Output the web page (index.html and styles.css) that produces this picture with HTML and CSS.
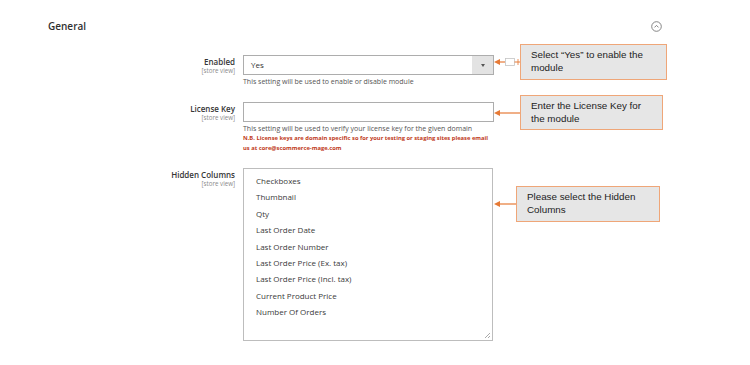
FILE: index.html
```html
<!DOCTYPE html>
<html lang="en">
<head>
  <meta charset="UTF-8">
  <meta name="viewport" content="width=device-width, initial-scale=1.0">
  <title>General Settings</title>
  <link rel="stylesheet" href="styles.css">
</head>
<body>
  <div class="section">
    <div class="section-head">
      <h2>General</h2>
      <span class="toggle">
        <svg width="11" height="11" viewBox="0 0 11 11">
          <circle cx="5.5" cy="5.5" r="4.8" fill="none" stroke="#777" stroke-width="0.9"/>
          <path d="M3.5 6.4 L5.5 4.4 L7.5 6.4" fill="none" stroke="#777" stroke-width="0.9"/>
        </svg>
      </span>
    </div>

    <div class="field">
      <div class="label">
        <span class="name">Enabled</span>
        <span class="scope">[store view]</span>
      </div>
      <div class="control">
        <div class="select">
          <span class="value">Yes</span>
          <span class="caret"></span>
        </div>
        <p class="note">This setting will be used to enable or disable module</p>
      </div>
      <div class="hint hint-enabled">
        <svg class="arrow" width="26" height="10" viewBox="0 0 26 10">
          <polygon points="0,5 6,2 6,8" fill="#e67a36"/>
          <line x1="5" y1="5" x2="11" y2="5" stroke="#e67a36" stroke-width="1.2"/>
          <rect x="11.5" y="1.5" width="9" height="7" fill="none" stroke="#c4c4c4" stroke-width="0.8"/>
          <line x1="20.5" y1="5" x2="26" y2="5" stroke="#e67a36" stroke-width="1"/>
          <line x1="24" y1="2" x2="24" y2="8" stroke="#e67a36" stroke-width="0.8"/>
        </svg>
        <div class="hint-box">Select “Yes” to enable the module</div>
      </div>
    </div>

    <div class="field">
      <div class="label">
        <span class="name">License Key</span>
        <span class="scope">[store view]</span>
      </div>
      <div class="control">
        <div class="input"></div>
        <p class="note">This setting will be used to verify your license key for the given domain</p>
        <p class="note warn">N.B. License keys are domain specific so for your testing or staging sites please email us at core@scommerce-mage.com</p>
      </div>
      <div class="hint hint-license">
        <svg class="arrow" width="26" height="10" viewBox="0 0 26 10">
          <polygon points="0,5 6,2 6,8" fill="#e67a36"/>
          <line x1="5" y1="5" x2="26" y2="5" stroke="#e67a36" stroke-width="1.2"/>
        </svg>
        <div class="hint-box">Enter the License Key for the module</div>
      </div>
    </div>

    <div class="field">
      <div class="label">
        <span class="name">Hidden Columns</span>
        <span class="scope">[store view]</span>
      </div>
      <div class="control">
        <ul class="multiselect">
          <li>Checkboxes</li>
          <li>Thumbnail</li>
          <li>Qty</li>
          <li>Last Order Date</li>
          <li>Last Order Number</li>
          <li>Last Order Price (Ex. tax)</li>
          <li>Last Order Price (Incl. tax)</li>
          <li>Current Product Price</li>
          <li>Number Of Orders</li>
        </ul>
      </div>
      <div class="hint hint-columns">
        <svg class="arrow" width="22" height="10" viewBox="0 0 22 10">
          <polygon points="0,5 6,2 6,8" fill="#e67a36"/>
          <line x1="5" y1="5" x2="22" y2="5" stroke="#e67a36" stroke-width="1.2"/>
        </svg>
        <div class="hint-box">Please select the Hidden Columns</div>
      </div>
    </div>
  </div>
</body>
</html>
```

FILE: styles.css
```css
* {
  margin: 0;
  padding: 0;
  box-sizing: border-box;
}

body {
  background: #fff;
  font-family: 'Open Sans', 'Noto Sans', sans-serif;
  color: #333;
}

.section {
  width: 750px;
}

.section-head {
  display: flex;
  align-items: center;
  height: 50px;
  width: 662px;
  padding-left: 48px;
}

.section-head h2 {
  flex: 1;
  font-size: 10px;
  font-weight: 600;
  color: #303030;
  margin-top: 1px;
}

.toggle {
  display: flex;
  margin-top: 2px;
}

.field {
  display: flex;
  align-items: flex-start;
  margin-top: 15px;
}

.section-head + .field {
  margin-top: 5px;
}

.label {
  width: 235px;
  display: flex;
  flex-direction: column;
  align-items: flex-end;
  padding-top: 1px;
}

.label .name {
  font-size: 8px;
  font-weight: 600;
  line-height: 11px;
  color: #363636;
}

.label .scope {
  font-size: 6.2px;
  line-height: 7px;
  color: #8a8a8a;
}

.control {
  width: 251px;
  margin-left: 8px;
}

.select {
  display: flex;
  align-items: stretch;
  height: 20px;
  border: 1px solid #adadad;
}

.select .value {
  flex: 1;
  font-size: 8px;
  line-height: 18px;
  padding-left: 7px;
  color: #333;
}

.select .caret {
  width: 21px;
  background: #e3e3e3;
  display: flex;
  align-items: center;
  justify-content: center;
}

.select .caret::after {
  content: '';
  border-left: 2px solid transparent;
  border-right: 2px solid transparent;
  border-top: 3px solid #555;
}

.input {
  height: 20px;
  border: 1px solid #adadad;
}

.note {
  font-size: 7px;
  line-height: 10px;
  color: #555;
  margin-top: 2px;
}

.note.warn {
  margin-top: 0;
  font-weight: 700;
  color: #c03a1a;
  line-height: 9.5px;
  font-size: 5.8px;
}

.multiselect {
  position: relative;
  list-style: none;
  width: 250px;
  height: 173px;
  border: 1px solid #bdbdbd;
  padding: 4px 0 0 12px;
}

.multiselect li {
  font-size: 8px;
  line-height: 16.4px;
  color: #3a3a3a;
}

.multiselect::after {
  content: '';
  position: absolute;
  right: 2px;
  bottom: 2px;
  width: 5px;
  height: 5px;
  background: linear-gradient(135deg, transparent 45%, #aaa 46%, #aaa 55%, transparent 56%, transparent 70%, #aaa 71%, #aaa 80%, transparent 81%);
}

.hint {
  display: flex;
  align-items: center;
}

.hint-enabled {
  margin-top: -11px;
}

.hint-license {
  margin-top: -7px;
}

.hint-columns {
  margin-top: 18px;
}

.arrow {
  display: block;
  flex: none;
}

.hint-box {
  background: #e6e6e6;
  border: 1px solid #efa678;
  font-family: 'Liberation Sans', Arial, sans-serif;
  font-size: 9.8px;
  line-height: 12.5px;
  color: #222;
  padding: 4px 8px 5px 10px;
  height: 36px;
}

.hint-enabled .hint-box {
  width: 147px;
}

.hint-license .hint-box {
  width: 143px;
  height: 35px;
}

.hint-columns .hint-box {
  width: 144px;
}
```
